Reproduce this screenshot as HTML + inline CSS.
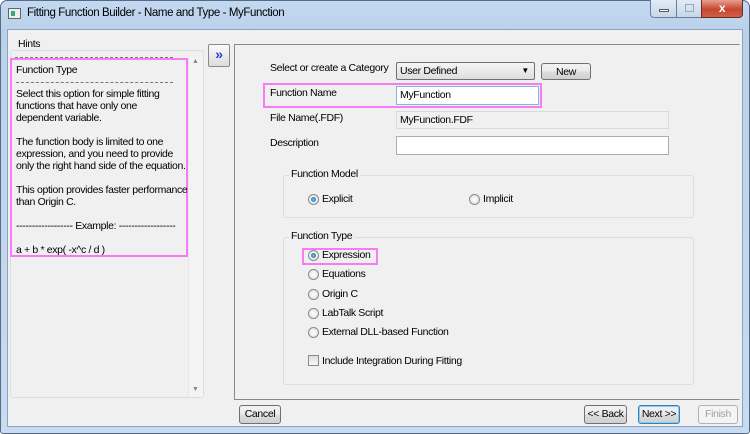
<!DOCTYPE html>
<html><head><style>
*{margin:0;padding:0;box-sizing:border-box}
body{width:750px;height:434px;overflow:hidden;background:#fff;font-family:"Liberation Sans",sans-serif;font-size:10.5px;letter-spacing:-0.35px;color:#000;position:relative;white-space:nowrap}
.a{position:absolute}
.frame{left:0;top:0;width:750px;height:434px;background:linear-gradient(#c3d9f1,#b9d1ea 30px,#c7dcf2);border:1px solid #5a6a80;border-radius:7px 7px 3px 3px}
.client{left:7px;top:29px;width:736px;height:398px;background:#f0f0f0;border:1px solid #8da2bd}
.pink{border:2px solid #f77bf2}
.btn{border:1px solid #707070;border-radius:3px;background:linear-gradient(#f2f2f2,#ebebeb 50%,#dddddd 51%,#cfcfcf);text-align:center;line-height:17px}
.inp{background:#fff;border:1px solid #abadb3;padding-left:3px;line-height:16px}
.grp{border:1px solid #d5dfe5;border-radius:3px}
.gl{background:#f0f0f0;padding:0 2px}
.rad{width:11px;height:11px;border-radius:50%;border:1px solid #8a8a8a;background:radial-gradient(#fff,#ddd)}
.rad.on::after{content:"";position:absolute;left:2px;top:2px;width:5px;height:5px;border-radius:50%;background:radial-gradient(#6fc3f0,#15649e)}
</style></head><body>
<div class="a frame"></div>
<div class="a" style="left:8px;top:8px;width:13px;height:11px;background:#eee;border:1px solid #666"><div style="margin:2px;width:4px;height:5px;background:#3a7"></div></div>
<div class="a" style="left:27px;top:7px;font-size:11.5px;letter-spacing:-0.4px">Fitting Function Builder - Name and Type - MyFunction</div>
<div class="a" style="left:650px;top:0;width:27px;height:18px;border:1px solid #6c7c94;border-top:none;border-radius:0 0 0 4px;background:linear-gradient(#e3ecf7,#c6d6ea)"><div style="margin:9px 8px;width:10px;height:3px;border:1px solid #555;background:#fff"></div></div>
<div class="a" style="left:676px;top:0;width:26px;height:18px;border:1px solid #6c7c94;border-top:none;background:linear-gradient(#e3ecf7,#c6d6ea)"><div style="margin:4px 8px;width:9px;height:8px;border:1px solid #9aa;"></div></div>
<div class="a" style="left:701px;top:0;width:42px;height:18px;border:1px solid #6b2a22;border-top:none;border-radius:0 0 4px 0;background:linear-gradient(#e8a08f,#c7462f 55%,#d0614a);color:#fff;font-weight:bold;font-size:12px;text-align:center;line-height:17px">x</div>
<div class="a client"></div>

<div class="a grp" style="left:10px;top:50px;width:194px;height:348px"></div>
<div class="a gl" style="left:16px;top:38px">Hints</div>
<div class="a" style="left:15px;top:57px;width:158px;border-top:1px dashed #777"></div>
<div class="a" style="left:188px;top:58px;width:15px;height:339px;background:#f3f3f3;border-left:1px solid #e6e6e6"></div>
<div class="a" style="left:192px;top:58px;font-size:7px;color:#888">▲</div>
<div class="a" style="left:192px;top:386px;font-size:7px;color:#888">▼</div>
<div class="a pink" style="left:10px;top:58px;width:178px;height:199px"></div>
<div class="a" style="left:16px;top:64px;width:170px;line-height:12px">Function Type<br><span style="display:block;border-top:1px dashed #777;width:157px;margin:6px 0 5px"></span>Select this option for simple fitting<br>functions that have only one<br>dependent variable.<br><br>The function body is limited to one<br>expression, and you need to provide<br>only the right hand side of the equation.<br><br>This option provides faster performance<br>than Origin C.<br><br>------------------ Example: ------------------<br><br>a + b * exp( -x^c / d )</div>

<div class="a" style="left:208px;top:44px;width:22px;height:23px;border:1px solid #8a8a8a;border-radius:2px;background:linear-gradient(#fafafa,#dcdcdc);color:#2a3bd8;font-weight:bold;font-size:14px;text-align:center;line-height:19px">»</div>

<div class="a" style="left:234px;top:44px;width:506px;height:356px;border:1px solid #8a8a8a;border-right-color:#eee;border-bottom-color:#888"></div>
<div class="a" style="left:270px;top:62px">Select or create a Category</div>
<div class="a inp" style="left:396px;top:62px;width:139px;height:18px;border-color:#707070;border-radius:2px;background:linear-gradient(#f5f5f5,#dedede)">User Defined<span style="position:absolute;right:5px;top:0;font-size:8px">▼</span></div>
<div class="a btn" style="left:541px;top:63px;width:50px;height:17px">New</div>
<div class="a pink" style="left:263px;top:83px;width:279px;height:25px"></div>
<div class="a" style="left:270px;top:87px">Function Name</div>
<div class="a inp" style="left:396px;top:86px;width:143px;height:19px;border-color:#7eb4ea;line-height:17px">MyFunction</div>
<div class="a" style="left:270px;top:112px">File Name(.FDF)</div>
<div class="a inp" style="left:396px;top:111px;width:273px;height:18px;background:#f0f0f0;border-color:#dadada">MyFunction.FDF</div>
<div class="a" style="left:270px;top:137px">Description</div>
<div class="a inp" style="left:396px;top:136px;width:273px;height:19px"></div>

<div class="a grp" style="left:283px;top:175px;width:411px;height:43px"></div>
<div class="a gl" style="left:289px;top:168px">Function Model</div>
<div class="a rad on" style="left:308px;top:194px"></div><div class="a" style="left:322px;top:193px">Explicit</div>
<div class="a rad" style="left:469px;top:194px"></div><div class="a" style="left:483px;top:193px">Implicit</div>

<div class="a grp" style="left:283px;top:237px;width:411px;height:148px"></div>
<div class="a gl" style="left:289px;top:230px">Function Type</div>
<div class="a pink" style="left:302px;top:248px;width:76px;height:17px"></div>
<div class="a rad on" style="left:308px;top:250px"></div><div class="a" style="left:322px;top:249px">Expression</div>
<div class="a rad" style="left:308px;top:269px"></div><div class="a" style="left:322px;top:268px">Equations</div>
<div class="a rad" style="left:308px;top:289px"></div><div class="a" style="left:322px;top:288px">Origin C</div>
<div class="a rad" style="left:308px;top:308px"></div><div class="a" style="left:322px;top:307px">LabTalk Script</div>
<div class="a rad" style="left:308px;top:327px"></div><div class="a" style="left:322px;top:326px">External DLL-based Function</div>
<div class="a" style="left:308px;top:355px;width:11px;height:11px;border:1px solid #8a8a8a;background:linear-gradient(#ddd,#fafafa)"></div><div class="a" style="left:322px;top:355px">Include Integration During Fitting</div>

<div class="a btn" style="left:239px;top:405px;width:42px;height:19px">Cancel</div>
<div class="a btn" style="left:584px;top:405px;width:43px;height:19px">&lt;&lt; Back</div>
<div class="a btn" style="left:638px;top:405px;width:42px;height:19px;border-color:#3c7fb1;box-shadow:inset 0 0 0 1px #7fd1f5">Next &gt;&gt;</div>
<div class="a btn" style="left:698px;top:405px;width:40px;height:19px;border-color:#adb2b5;background:#f4f4f4;color:#a0a0a0">Finish</div>
</body></html>
